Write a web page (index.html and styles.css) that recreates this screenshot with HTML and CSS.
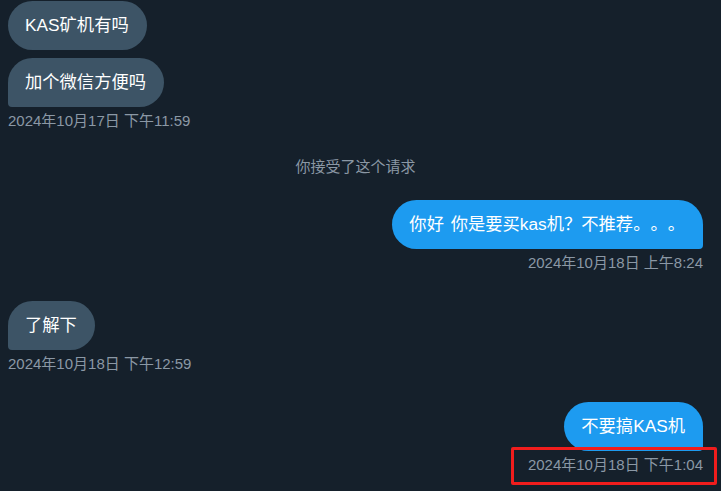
FILE: index.html
```html
<!DOCTYPE html>
<html lang="zh-CN">
<head>
<meta charset="utf-8">
<link rel="stylesheet" href="styles.css">
</head>
<body>
<div class="chat">
  <div class="group in">
    <div class="bubble">KAS矿机有吗</div>
    <div class="bubble last">加个微信方便吗</div>
    <div class="time">2024年10月17日 下午11:59</div>
  </div>
  <div class="system">你接受了这个请求</div>
  <div class="group out">
    <div class="bubble last">你好 你是要买kas机？不推荐。。。</div>
    <div class="time">2024年10月18日 上午8:24</div>
  </div>
  <div class="group in">
    <div class="bubble last">了解下</div>
    <div class="time">2024年10月18日 下午12:59</div>
  </div>
  <div class="group out">
    <div class="bubble last">不要搞KAS机</div>
    <div class="time">2024年10月18日 下午1:04</div>
  </div>
</div>
<div class="highlight"></div>
</body>
</html>
```
FILE: styles.css
```css
html, body {
  margin: 0;
  padding: 0;
  background: #15202b;
  height: 100%;
  overflow: hidden;
}
body {
  font-family: "Liberation Sans", "Noto Sans CJK SC", sans-serif;
  position: relative;
  text-spacing-trim: space-all;
}
.chat {
  display: flex;
  flex-direction: column;
  padding: 1px 18px 0 8px;
}
.group {
  display: flex;
  flex-direction: column;
  gap: 8px;
}
.group.in { align-items: flex-start; }
.group.out { align-items: flex-end; margin-top: 28px; }
.system + .group.out { margin-top: 23px; }
.bubble {
  font-size: 17.3px;
  line-height: 23px;
  color: #ffffff;
  padding: 13px 18px 13px 17px;
  border-radius: 25px;
  background: #3d5466;
  word-spacing: 2px;
  text-spacing-trim: space-all;
}
.out .bubble { background: #1d9bf0; }
.in .bubble.last { border-bottom-left-radius: 4px; }
.out .bubble.last { border-bottom-right-radius: 4px; }
.time {
  font-size: 15px;
  line-height: 20px;
  color: #8b98a5;
  margin-top: -4px;
}
.system {
  font-size: 15px;
  line-height: 20px;
  color: #8b98a5;
  text-align: center;
  margin-top: 26px;
}
.group.in + .group.in, .group.out + .group.in { margin-top: 28px; }
.highlight {
  position: absolute;
  left: 511px;
  top: 447px;
  width: 200px;
  height: 32px;
  border: 3px solid #f01d1d;
  border-radius: 2px;
}
```
